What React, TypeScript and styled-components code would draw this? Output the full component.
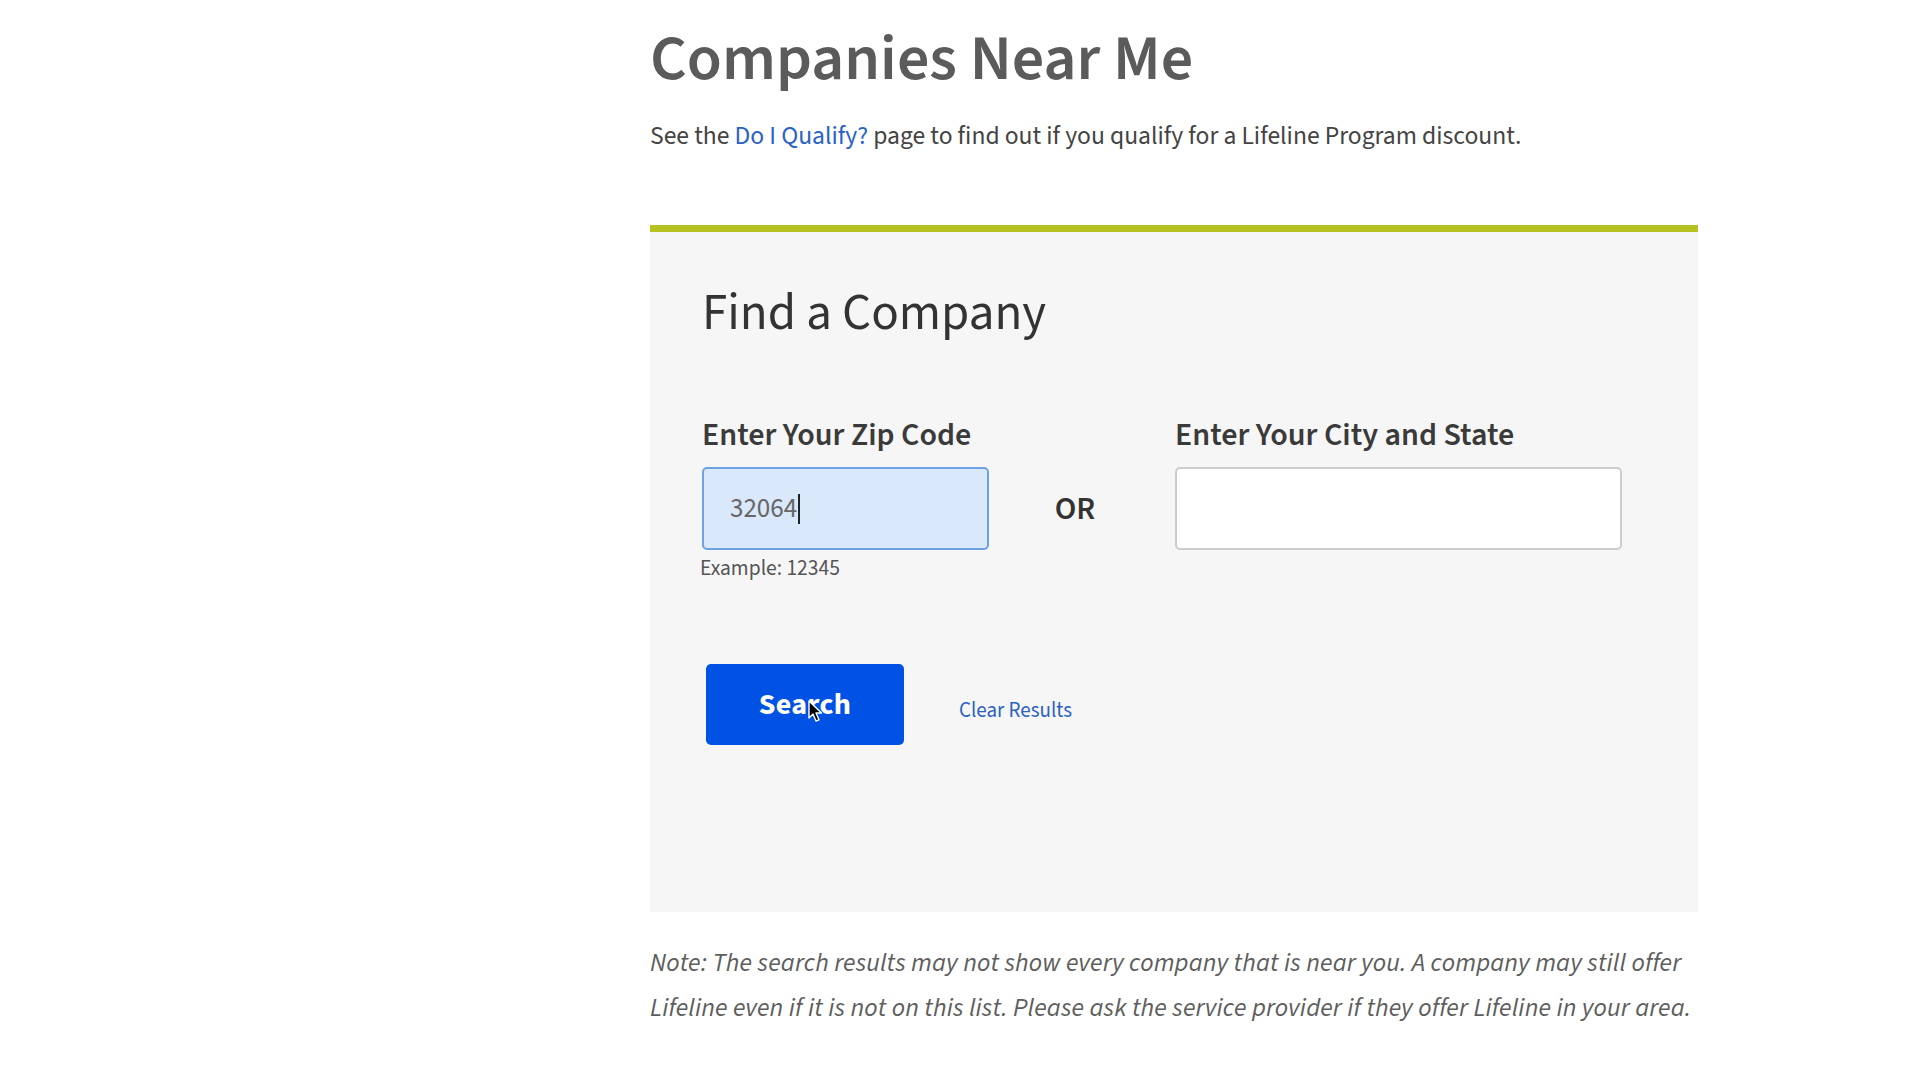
import React from "react";
import styled, { createGlobalStyle } from "styled-components";

const GlobalStyle = createGlobalStyle`
  html, body {
    margin: 0;
    padding: 0;
    background: #ffffff;
  }
  body {
    font-family: "Source Sans Pro", "Source Sans 3", Lato, "Noto Sans", sans-serif;
    color: #444444;
  }
  * { box-sizing: border-box; }
`;

const Page = styled.div`
  display: grid;
  grid-template-columns: 650px 1048px;
  min-height: 1080px;
`;

const Main = styled.main`
  grid-column: 2;
  display: flex;
  flex-direction: column;
`;

const Title = styled.h1`
  margin: 19px 0 0;
  font-size: 64px;
  line-height: 80px;
  font-weight: 600;
  color: #5b5b5b;
`;

const Intro = styled.p`
  margin: 21px 0 0;
  font-size: 25.6px;
  line-height: 32px;
  color: #444444;
`;

const TextLink = styled.a`
  color: #2a62c6;
  text-decoration: none;
`;

const Panel = styled.section`
  margin-top: 73px;
  background: #f6f6f6;
  border-top: 7px solid #b6c21f;
  padding: 51px 52px 167px;
  display: flex;
  flex-direction: column;
`;

const PanelTitle = styled.h2`
  margin: 0;
  font-size: 51px;
  line-height: 60px;
  font-weight: 400;
  color: #333333;
`;

const FieldsRow = styled.div`
  margin-top: 75px;
  display: flex;
  align-items: flex-start;
`;

const Field = styled.div<{ $width: number }>`
  display: flex;
  flex-direction: column;
  width: ${(p) => p.$width}px;
`;

const Label = styled.label`
  font-size: 32px;
  line-height: 34px;
  font-weight: 600;
  color: #3a3a3a;
  white-space: nowrap;
  margin-bottom: 15px;
`;

const ZipBox = styled.div`
  height: 83px;
  border: 2px solid #6fa2e2;
  border-radius: 5px;
  background: #d9e8fb;
  display: flex;
  align-items: center;
  padding-left: 26px;
  font-size: 27px;
  color: #666666;
`;

const Caret = styled.span`
  display: inline-block;
  width: 2px;
  height: 30px;
  margin-left: 1px;
  background: #222222;
`;

const CityInput = styled.input`
  height: 83px;
  border: 2px solid #cccccc;
  border-radius: 5px;
  background: #ffffff;
  font-size: 27px;
  padding: 0 24px;
  outline: none;
`;

const Hint = styled.div`
  margin-top: 7px;
  font-size: 21.5px;
  line-height: 24px;
  color: #555555;
  margin-left: -2px;
`;

const Or = styled.div`
  width: 186px;
  height: 83px;
  margin-top: 49px;
  display: flex;
  align-items: center;
  justify-content: center;
  padding-right: 14px;
  font-size: 32px;
  font-weight: 600;
  color: #333333;
`;

const Actions = styled.div`
  margin-top: 83px;
  display: flex;
  align-items: center;
  padding-left: 4px;
  gap: 55px;
`;

const SearchButton = styled.button`
  position: relative;
  width: 198px;
  height: 81px;
  border: none;
  border-radius: 5px;
  background: #0052e4;
  color: #ffffff;
  font-family: inherit;
  font-size: 30px;
  font-weight: 700;
  letter-spacing: 0.3px;
  cursor: pointer;
`;

const Pointer = styled.svg`
  position: absolute;
  left: 102px;
  top: 36px;
  width: 16px;
  height: 24px;
`;

const ClearLink = styled.a`
  margin-top: 10px;
  font-size: 21px;
  color: #2c62c0;
  text-decoration: none;
`;

const Note = styled.p`
  margin: 28px 0 0;
  font-size: 26px;
  line-height: 45px;
  font-style: italic;
  color: #5e5e5e;
  letter-spacing: 0.15px;
`;

export default function App() {
  return (
    <>
      <GlobalStyle />
      <Page>
        <Main>
          <Title>Companies Near Me</Title>
          <Intro>
            See the <TextLink href="#">Do I Qualify?</TextLink> page to find out if you qualify for a
            Lifeline Program discount.
          </Intro>
          <Panel>
            <PanelTitle>Find a Company</PanelTitle>
            <FieldsRow>
              <Field $width={287}>
                <Label>Enter Your Zip Code</Label>
                <ZipBox>
                  32064
                  <Caret />
                </ZipBox>
                <Hint>Example: 12345</Hint>
              </Field>
              <Or>OR</Or>
              <Field $width={447}>
                <Label>Enter Your City and State</Label>
                <CityInput type="text" aria-label="City and State" />
              </Field>
            </FieldsRow>
            <Actions>
              <SearchButton type="button">
                Search
                <Pointer viewBox="0 0 16 24">
                  <path
                    d="M1 1 L1 18 L5 14 L8 21 L11 19.8 L8 13 L13.5 13 Z"
                    fill="#000000"
                    stroke="#ffffff"
                    strokeWidth="1.4"
                    strokeLinejoin="round"
                  />
                </Pointer>
              </SearchButton>
              <ClearLink href="#">Clear Results</ClearLink>
            </Actions>
          </Panel>
          <Note>
            Note: The search results may not show every company that is near you. A company may still
            offer Lifeline even if it is not on this list. Please ask the service provider if they
            offer Lifeline in your area.
          </Note>
        </Main>
      </Page>
    </>
  );
}
